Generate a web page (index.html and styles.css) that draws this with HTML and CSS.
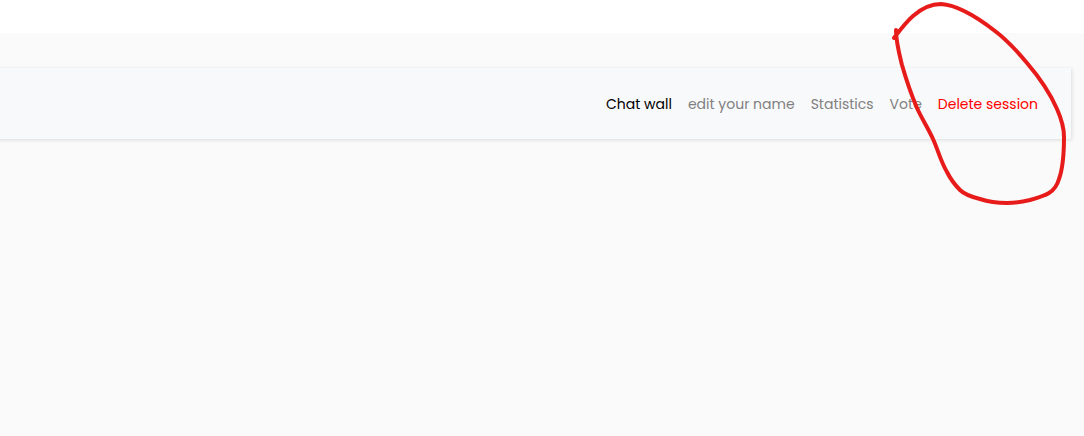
FILE: index.html
```html
<!DOCTYPE html>
<html lang="en">
<head>
  <meta charset="utf-8">
  <meta name="viewport" content="width=device-width, initial-scale=1">
  <title>Chat wall</title>
  <link rel="stylesheet" href="styles.css">
</head>
<body>
  <main class="content">
    <nav class="navbar" aria-label="Session">
      <ul class="nav-list">
        <li><a class="nav-link nav-link-active" href="#chat" aria-current="page">Chat wall</a></li>
        <li><a class="nav-link" href="#name">edit your name</a></li>
        <li><a class="nav-link" href="#statistics">Statistics</a></li>
        <li><a class="nav-link" href="#vote">Vote</a></li>
        <li><a class="nav-link nav-link-danger" href="#delete">Delete session</a></li>
      </ul>
    </nav>
  </main>
  <svg class="annotation" width="194" height="210" viewBox="890 0 194 210" aria-hidden="true">
    <path d="M894 38C900 30 906 22 913 16C922 8 931 4 941 4C958 5 977 17 995 31C1007 40 1017 51 1027 63C1039 77 1050 93 1057 109C1061 118 1064 127 1064 137C1064 152 1063 168 1059 179C1057 186 1054 190 1049 193C1044 196 1037 198 1030 200C1022 202 1015 203 1007 203C998 203 989 202 980 199C972 197 965 195 960 190C955 185 950 178 947 172C941 162 938 150 933 139C928 128 922 119 917 108C911 94 906 79 902 65C899 53 896 42 896 30"/>
  </svg>
</body>
</html>
```
FILE: styles.css
```css
* {
  box-sizing: border-box;
}

body {
  position: relative;
  display: flex;
  flex-direction: column;
  min-height: 100vh;
  margin: 0;
  padding-top: 33px;
  background: #fff;
  font-family: Poppins, Inter, sans-serif;
  font-size: 14px;
  line-height: 24px;
}

.content {
  flex: 1;
  padding: 35px 13px 35px 0;
  background: #fafafa;
}

.navbar {
  margin-left: -8px;
  padding: 16px 25px 15px 24px;
  background: #f8f9fb;
  box-shadow: 1px 1px 4px rgba(0, 0, 0, 0.12);
}

.nav-list {
  display: flex;
  flex-wrap: wrap;
  justify-content: flex-end;
  margin: 0;
  padding: 0;
  list-style: none;
}

.nav-link {
  display: block;
  padding: 8px;
  color: #808080;
  text-decoration: none;
}

.nav-link-active {
  color: #000;
}

.nav-link-danger {
  color: #f00;
}

.annotation {
  position: absolute;
  top: 0;
  right: 0;
  fill: none;
  stroke: #e81b1b;
  stroke-width: 4;
  stroke-linecap: round;
  stroke-linejoin: round;
  pointer-events: none;
}
```
